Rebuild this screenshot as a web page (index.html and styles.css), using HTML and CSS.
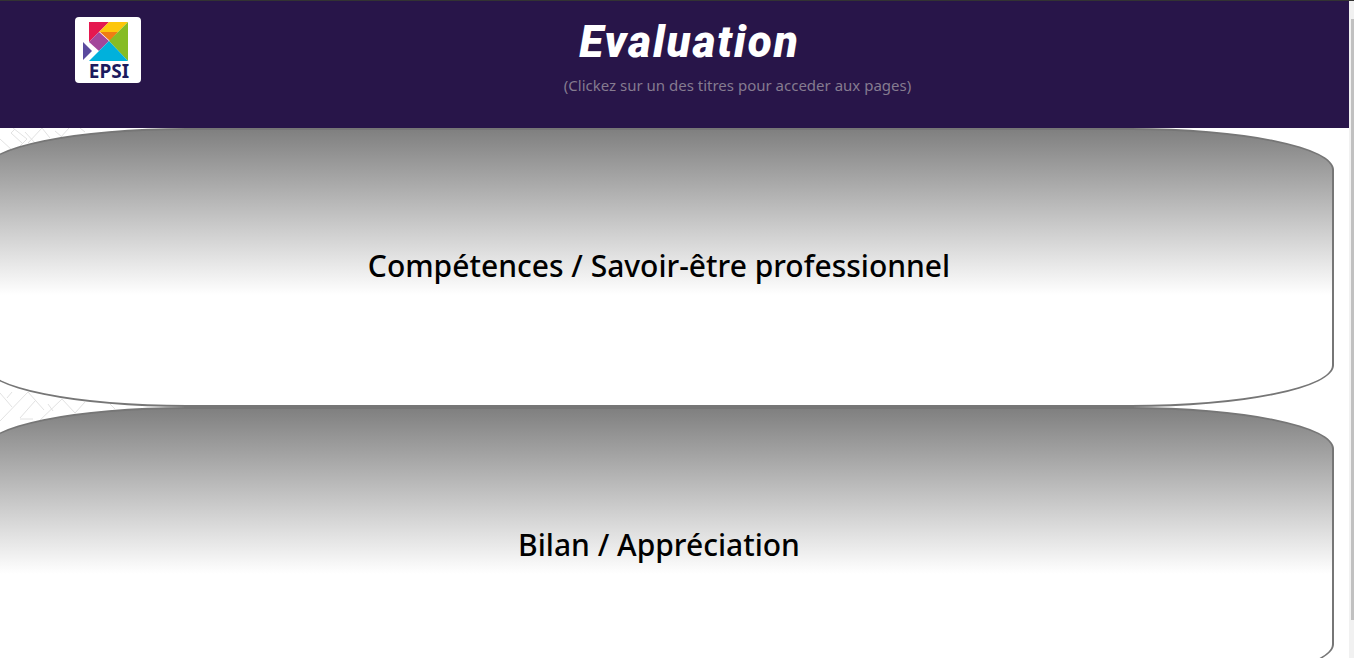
FILE: index.html
```html
<!DOCTYPE html>
<html lang="fr">
<head>
<meta charset="utf-8">
<title>Evaluation</title>
<link rel="stylesheet" href="styles.css">
</head>
<body>
<div class="page">
  <header class="header">
    <a class="logo" href="#" aria-label="EPSI">
      <svg class="logo-mark" viewBox="0 0 66 66" role="img" aria-label="EPSI">
        <path fill="#e5184f" d="M14 5H34L23 16L14 25Z"/>
        <path fill="#fdc60b" d="M34 5H53L43 15H24Z"/>
        <path fill="#f07c13" d="M24 15H43L35 24L25 15Z"/>
        <path fill="#86bc25" d="M53 5V44L34 24Z"/>
        <path fill="#a3479b" d="M24 15L34 24L24 34L14 25Z"/>
        <path fill="#00b1dc" d="M34 24L53 44H14Z"/>
        <path fill="#5b4a9e" d="M8 25L17 34L8 43Z"/>
        <text class="logo-text" x="34" y="61" text-anchor="middle">EPSI</text>
      </svg>
    </a>
    <div class="heading">
      <h1 class="title">Evaluation</h1>
      <p class="hint">(Clickez sur un des titres pour acceder aux pages)</p>
    </div>
  </header>
  <main class="menu">
    <svg class="weave" aria-hidden="true">
      <path d="M0 11L13 23M13 0L27 11L15 23M15 1L11 5L22 15M25 4L35 15M42 0L28 15M42 0L50 10M55 3L62 9M69 0L60 10M80 0L85 4"/>
      <path d="M0 265L12 279M28 264L0 293M12 264L7 270M28 264L44 282M35 273L20 290M20 291H33M62 271L37 295M62 271L75 285L85 274M48 276L53 283M110 276L115 281"/>
    </svg>
    <button class="card" type="button">Compétences / Savoir-être professionnel</button>
    <button class="card" type="button">Bilan / Appréciation</button>
  </main>
</div>
<div class="scrollbar"><div class="thumb"></div></div>
</body>
</html>
```
FILE: styles.css
```css
* { box-sizing: border-box; }
body {
  display: flex;
  height: 100vh;
  margin: 0;
  overflow: hidden;
  border-top: 1px solid #333333;
  background: #ffffff;
  font-family: "Segoe UI", "Noto Sans", sans-serif;
}
.page { flex: 1; min-width: 0; }
.header {
  display: flex;
  min-height: 127px;
  padding: 16px 0 0 75px;
  background: #281549;
}
.logo {
  width: 66px;
  height: 66px;
  border-radius: 4px;
  background: #ffffff;
}
.logo-mark { display: block; width: 100%; }
.logo-text {
  fill: #1c1a5e;
  font-family: "Noto Sans", sans-serif;
  font-size: 19px;
  font-weight: 700;
}
.heading {
  flex: 1;
  padding-right: 15px;
  text-align: center;
}
.title {
  margin: 0;
  padding-right: 96px;
  color: #ffffff;
  font-family: Impact, Roboto, sans-serif;
  font-size: 44px;
  font-style: italic;
  font-weight: 900;
  letter-spacing: 2px;
  line-height: 50px;
}
.hint {
  margin: 0;
  color: #857b90;
  font-size: 15px;
  line-height: 36px;
}
.menu {
  position: relative;
  margin-left: -16px;
  padding-right: 15px;
}
.weave {
  position: absolute;
  top: 0;
  left: 16px;
  width: 160px;
  height: 310px;
  fill: none;
  stroke: #e2e2e2;
}
.card {
  position: relative;
  display: block;
  width: 100%;
  height: 279px;
  padding: 0 0 4px;
  border: 2px solid #767676;
  border-radius: 15%;
  background: linear-gradient(#808080, #ffffff 60%);
  color: #000000;
  font-family: inherit;
  font-size: 30px;
  font-weight: 500;
}
.scrollbar {
  width: 5px;
  padding: 18px 0 0 2px;
  background: #f1f1f1;
}
.thumb { height: 94%; background: #c1c1c1; }
```
